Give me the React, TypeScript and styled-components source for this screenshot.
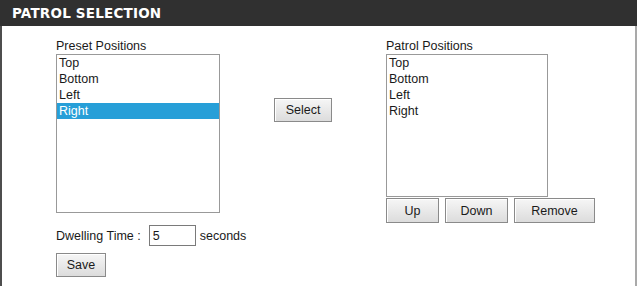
import React, { useState } from 'react';
import styled, { createGlobalStyle } from 'styled-components';

const GlobalStyle = createGlobalStyle`
  html, body {
    margin: 0;
    padding: 0;
    background: #ffffff;
  }
  body {
    font-family: "Liberation Sans", Arial, sans-serif;
    font-size: 12.5px;
    color: #1a1a1a;
  }
`;

// Estilos
const Panel = styled.div`
  width: 637px;
  min-height: 286px;
  box-sizing: border-box;
  border-left: 2px solid #4e4e4e;
  border-right: 2px solid #a9a9a9;
  background: #ffffff;
`;

const PanelHeader = styled.div`
  height: 26px;
  background: #303030;
  display: flex;
  align-items: center;
  padding-left: 12px;
  margin-left: -2px;
  margin-right: -2px;
`;

const PanelTitle = styled.h2`
  margin: 0;
  font-family: "DejaVu Sans", Verdana, sans-serif;
  font-size: 13.5px;
  font-weight: bold;
  color: #ffffff;
  letter-spacing: 0.2px;
`;

const Body = styled.div`
  display: grid;
  grid-template-columns: 164px 166px auto;
  padding: 12px 0 0 54px;
`;

const Column = styled.div`
  display: flex;
  flex-direction: column;
  align-items: flex-start;
`;

const MiddleColumn = styled.div`
  display: flex;
  justify-content: center;
  align-items: flex-start;
  padding-top: 60px;
`;

const Label = styled.div`
  line-height: 16px;
  white-space: nowrap;
`;

const ListBox = styled.div<{ $width: number; $height: number }>`
  width: ${p => p.$width}px;
  height: ${p => p.$height}px;
  box-sizing: border-box;
  border: 1px solid #999999;
  background: #ffffff;
  overflow: hidden;
`;

const ListItem = styled.div<{ $selected?: boolean }>`
  height: 16px;
  line-height: 16px;
  padding-left: 2px;
  background: ${p => (p.$selected ? '#279fd8' : 'transparent')};
  color: ${p => (p.$selected ? '#ffffff' : '#1a1a1a')};
  cursor: default;
`;

const Button = styled.button<{ $width: number; $height?: number }>`
  width: ${p => p.$width}px;
  height: ${p => p.$height ?? 25}px;
  box-sizing: border-box;
  padding: 0;
  font-family: "Liberation Sans", Arial, sans-serif;
  font-size: 12.5px;
  color: #1a1a1a;
  border: 1px solid #8a8a8a;
  border-radius: 0;
  background: linear-gradient(#f6f6f6, #dcdcdc);
  box-shadow: inset 1px 1px 0 #ffffff;
  cursor: pointer;
`;

const ButtonRow = styled.div`
  display: flex;
  gap: 6px;
  margin-top: 1px;
`;

const DwellRow = styled.div`
  display: flex;
  align-items: center;
  white-space: nowrap;
  margin-top: 12px;
`;

const TimeInput = styled.input`
  width: 47px;
  height: 21px;
  box-sizing: border-box;
  margin: 0 4px 0 8px;
  padding: 0 3px;
  font-family: "Liberation Sans", Arial, sans-serif;
  font-size: 12.5px;
  color: #1a1a1a;
  border: 1px solid #7a7a7a;
  outline: none;
`;

const SaveRow = styled.div`
  margin-top: 7px;
`;

const posiciones = ['Top', 'Bottom', 'Left', 'Right'];

const App: React.FC = () => {
  const [preset, setPreset] = useState('Right');
  const [patrol, setPatrol] = useState<string | null>(null);
  const [dwell, setDwell] = useState('5');

  return (
    <>
      <GlobalStyle />
      <Panel>
        <PanelHeader>
          <PanelTitle>PATROL SELECTION</PanelTitle>
        </PanelHeader>
        <Body>
          <Column>
            <Label>Preset Positions</Label>
            <ListBox $width={164} $height={159}>
              {posiciones.map(p => (
                <ListItem key={p} $selected={preset === p} onClick={() => setPreset(p)}>
                  {p}
                </ListItem>
              ))}
            </ListBox>
            <DwellRow>
              Dwelling Time :
              <TimeInput value={dwell} onChange={e => setDwell(e.target.value)} />
              seconds
            </DwellRow>
            <SaveRow>
              <Button $width={50} $height={24}>Save</Button>
            </SaveRow>
          </Column>

          <MiddleColumn>
            <Button $width={58} $height={24}>Select</Button>
          </MiddleColumn>

          <Column>
            <Label>Patrol Positions</Label>
            <ListBox $width={162} $height={143}>
              {posiciones.map(p => (
                <ListItem key={p} $selected={patrol === p} onClick={() => setPatrol(p)}>
                  {p}
                </ListItem>
              ))}
            </ListBox>
            <ButtonRow>
              <Button $width={53}>Up</Button>
              <Button $width={63}>Down</Button>
              <Button $width={81}>Remove</Button>
            </ButtonRow>
          </Column>
        </Body>
      </Panel>
    </>
  );
};

export default App;
